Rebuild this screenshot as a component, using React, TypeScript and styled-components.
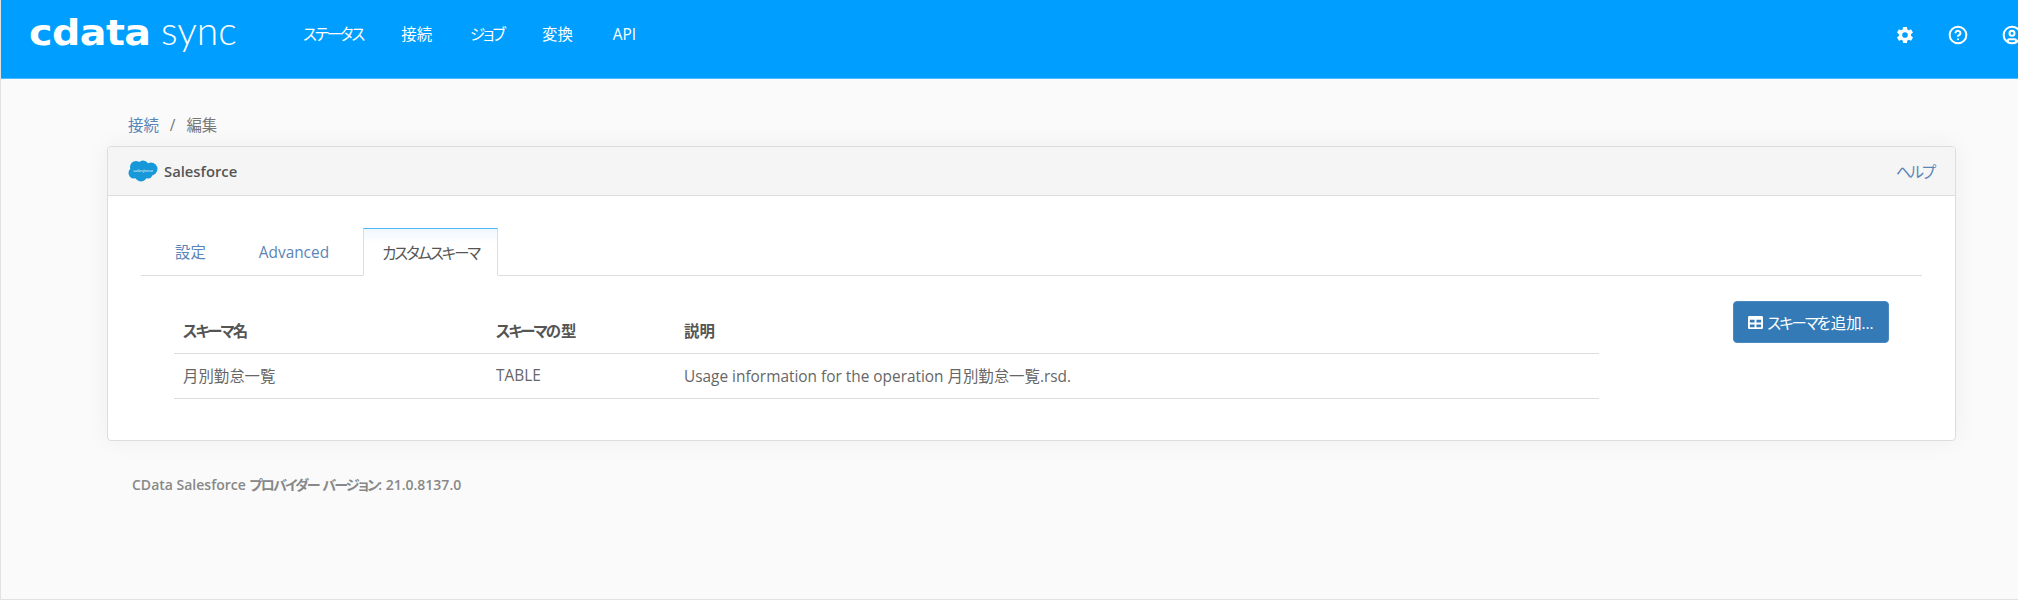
import React from "react";
import styled, { createGlobalStyle } from "styled-components";
import { IoSettingsSharp } from "react-icons/io5";
import { LuCircleHelp, LuCircleUser } from "react-icons/lu";
import { FaTable } from "react-icons/fa";

const Global = createGlobalStyle`
  html, body { margin: 0; padding: 0; }
  body {
    background: #fafafa;
    font-family: "Open Sans", "Noto Sans CJK JP", sans-serif;
    font-size: 15.4px;
    font-feature-settings: "palt";
    color: #555;
  }
`;

const Page = styled.div`
  width: 2018px;
  height: 600px;
  box-sizing: border-box;
  overflow: hidden;
  border-left: 1px solid #e2e2e2;
  border-bottom: 1px solid #e2e2e2;
  background: #fafafa;
`;

const TopBar = styled.header`
  height: 79px;
  box-sizing: border-box;
  background: #009fff;
  border-bottom: 1px solid #4dbbff;
  display: flex;
  align-items: flex-start;
  margin-left: -1px;
`;

const Brand = styled.div`
  display: flex;
  align-items: baseline;
  margin: 5px 0 0 29px;
  width: 274px;
  color: #fff;
  height: 50px;
`;

const BrandMark = styled.span`
  font-family: "DejaVu Sans", sans-serif;
  font-weight: 700;
  font-size: 36px;
  line-height: 50px;
  letter-spacing: -0.5px;
  display: inline-block;
  width: 132px;
  transform: scaleX(1.1);
  transform-origin: left;
`;

const BrandName = styled.span`
  font-family: "Lato", sans-serif;
  font-weight: 300;
  font-size: 39px;
  line-height: 50px;
`;

const Nav = styled.nav`
  display: flex;
  gap: 38px;
  margin-top: 25px;
`;

const NavLink = styled.a`
  color: #fff;
  line-height: 20px;
  &:last-child {
    margin-left: 2px;
  }
`;

const Kana = styled.span`
  letter-spacing: -0.13em;
`;

const Tools = styled.div`
  margin-left: auto;
  display: flex;
  gap: 34px;
  margin-top: 25px;
  margin-right: -4px;
  color: #fff;
  height: 20px;
  align-items: center;
`;

const Main = styled.main`
  padding: 37px 62px 0 106px;
`;

const Crumbs = styled.div`
  display: flex;
  gap: 11px;
  padding-left: 21px;
  line-height: 20px;
  height: 30px;
  color: #777;
`;

const Link = styled.a`
  color: #5a85b8;
`;

const Panel = styled.section`
  background: #fff;
  border: 1px solid #ddd;
  border-radius: 4px;
  box-shadow: 0 0 24px rgba(0, 0, 0, 0.05);
  height: 295px;
  box-sizing: border-box;
`;

const PanelHead = styled.div`
  height: 49px;
  box-sizing: border-box;
  background: #f5f5f5;
  border-bottom: 1px solid #ddd;
  border-radius: 3px 3px 0 0;
  display: flex;
  align-items: center;
  padding: 0 21px 0 20px;
`;

const PanelTitle = styled.strong`
  font-weight: 600;
  font-size: 14.8px;
  color: #555;
  margin-left: 6px;
`;

const HelpLink = styled(Link)`
  margin-left: auto;
`;

const PanelBody = styled.div`
  padding: 32px 33px 0 33px;
`;

const Tabs = styled.div`
  display: flex;
  gap: 16px;
  padding-left: 15px;
  height: 48px;
  box-sizing: border-box;
  border-bottom: 1px solid #ddd;
`;

const Tab = styled.div<{ $active?: boolean }>`
  box-sizing: border-box;
  height: 48px;
  padding: 15px 18px 0 ${(p) => (p.$active ? "18px" : "19px")};
  line-height: 20px;
  color: ${(p) => (p.$active ? "#555" : "#5a85b8")};
  ${(p) =>
    p.$active
      ? `
    background: linear-gradient(#eef8ff, #fff 14px);
    border: 1px solid #ddd;
    border-top: 1px solid #4db8f5;
    border-bottom: 1px solid #fff;
  `
      : ""}
`;

const Content = styled.div`
  display: flex;
  align-items: flex-start;
  padding: 25px 33px 0 33px;
`;

const Table = styled.table`
  width: 1425px;
  margin-top: 9px;
  border-collapse: collapse;
  table-layout: fixed;
`;

const HeadCell = styled.th<{ $w?: number }>`
  width: ${(p) => (p.$w ? `${p.$w}px` : "auto")};
  text-align: left;
  font-weight: 600;
  height: 43px;
  box-sizing: border-box;
  padding: 0 9px 2px;
  color: #555;
  border-bottom: 1px solid #ddd;
`;

const Cell = styled.td`
  height: 45px;
  box-sizing: border-box;
  padding: 0 9px;
  color: #666;
  border-bottom: 1px solid #ddd;
`;

const AddButton = styled.button`
  margin-left: auto;
  width: 156px;
  height: 42px;
  background: #337ab7;
  border: 1px solid #4a88bf;
  border-radius: 4px;
  color: #fff;
  font: inherit;
  font-feature-settings: "palt";
  display: flex;
  align-items: center;
  justify-content: center;
  gap: 4px;
  padding: 0;
`;

const Foot = styled.div`
  margin-top: 34px;
  padding-left: 25px;
  font-size: 14px;
  font-weight: 600;
  color: #888;
  line-height: 20px;
`;

const CloudLogo = () => (
  <svg width="30" height="22" viewBox="0 0 30 22">
    <g fill="#1798d8">
      <circle cx="8" cy="7" r="6" />
      <circle cx="15" cy="6" r="5.500" />
      <circle cx="23" cy="9" r="6.500" />
      <circle cx="6" cy="13" r="5.500" />
      <circle cx="13" cy="15.500" r="6" />
      <circle cx="20" cy="14" r="4.500" />
    </g>
    <text x="15" y="12" textAnchor="middle" fill="#e6f5fc" fontSize="5" fontFamily="Liberation Serif, serif" fontStyle="italic">
      salesforce
    </text>
  </svg>
);

export default function App() {
  return (
    <>
      <Global />
      <Page>
        <TopBar>
          <Brand>
            <BrandMark>cdata</BrandMark>
            <BrandName>sync</BrandName>
          </Brand>
          <Nav>
            <NavLink><Kana>ステータス</Kana></NavLink>
            <NavLink>接続</NavLink>
            <NavLink><Kana>ジョブ</Kana></NavLink>
            <NavLink>変換</NavLink>
            <NavLink>API</NavLink>
          </Nav>
          <Tools>
            <IoSettingsSharp size={18} />
            <LuCircleHelp size={20} strokeWidth={2.4} />
            <LuCircleUser size={20} strokeWidth={2.4} />
          </Tools>
        </TopBar>
        <Main>
          <Crumbs>
            <Link>接続</Link>
            <span>/</span>
            <span>編集</span>
          </Crumbs>
          <Panel>
            <PanelHead>
              <CloudLogo />
              <PanelTitle>Salesforce</PanelTitle>
              <HelpLink><Kana>ヘルプ</Kana></HelpLink>
            </PanelHead>
            <PanelBody>
              <Tabs>
                <Tab>設定</Tab>
                <Tab>Advanced</Tab>
                <Tab $active><Kana>カスタムスキーマ</Kana></Tab>
              </Tabs>
              <Content>
                <Table>
                  <thead>
                    <tr>
                      <HeadCell $w={313}><Kana>スキーマ</Kana>名</HeadCell>
                      <HeadCell $w={188}><Kana>スキーマ</Kana>の型</HeadCell>
                      <HeadCell>説明</HeadCell>
                    </tr>
                  </thead>
                  <tbody>
                    <tr>
                      <Cell>月別勤怠一覧</Cell>
                      <Cell>TABLE</Cell>
                      <Cell>Usage information for the operation 月別勤怠一覧.rsd.</Cell>
                    </tr>
                  </tbody>
                </Table>
                <AddButton>
                  <FaTable size={15} />
                  <span><Kana>スキーマ</Kana>を追加...</span>
                </AddButton>
              </Content>
            </PanelBody>
          </Panel>
          <Foot>CData Salesforce <Kana>プロバイダー</Kana> <Kana>バージョン</Kana>: 21.0.8137.0</Foot>
        </Main>
      </Page>
    </>
  );
}
